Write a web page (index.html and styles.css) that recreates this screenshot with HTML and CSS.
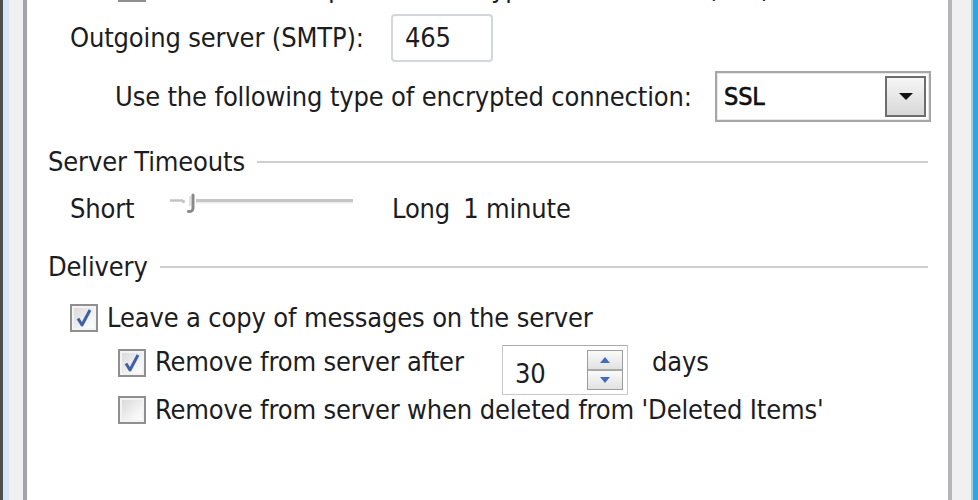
FILE: index.html
```html
<!DOCTYPE html>
<html>
<head>
<meta charset="utf-8">
<link rel="stylesheet" href="styles.css">
</head>
<body>
<div class="window">
  <div class="frame-left"></div>
  <div class="panel">
    <div class="row row-ssl-in">
      <span class="check"></span>
      <span class="label">This server requires an encrypted connection (SSL)</span>
    </div>
    <div class="row row-out">
      <span class="label label-out">Outgoing server (SMTP):</span>
      <div class="textbox">465</div>
    </div>
    <div class="row row-enc">
      <span class="label label-enc">Use the following type of encrypted connection:</span>
      <div class="combo">
        <span class="combo-value">SSL</span>
        <span class="combo-btn"><svg width="16" height="9" viewBox="0 0 16 9"><path d="M1 1 H15 L8 8 Z" fill="#111"/></svg></span>
      </div>
    </div>
    <div class="group group-timeouts">
      <span class="group-title">Server Timeouts</span>
      <span class="group-line"></span>
    </div>
    <div class="row row-timeout">
      <span class="label label-short">Short</span>
      <svg class="slider" width="184" height="30" viewBox="0 0 184 30">
        <path d="M0 8.5 H13 M13.5 8 V11" stroke="#c4c4c4" stroke-width="2.5" fill="none"/>
        <rect x="26" y="7" width="157" height="3" fill="#c6c6c6"/>
        <rect x="26" y="10" width="157" height="1.5" fill="#ececec"/>
        <path d="M23 3 V16 Q23 20 18.5 19.5" stroke="#8a8a8a" stroke-width="3" fill="none" stroke-linecap="round"/>
        <path d="M20 4 V14" stroke="#d8d8d8" stroke-width="1.5"/>
      </svg>
      <span class="label label-long">Long</span>
      <span class="label">1 minute</span>
    </div>
    <div class="group group-delivery">
      <span class="group-title">Delivery</span>
      <span class="group-line"></span>
    </div>
    <div class="row row-leave">
      <span class="check checked"><svg width="24" height="24" viewBox="0 0 24 24"><path d="M6 12.5 L10 19 L18 4" stroke="#3f5fa8" stroke-width="3" fill="none" stroke-linejoin="round"/></svg></span>
      <span class="label">Leave a copy of messages on the server</span>
    </div>
    <div class="row row-after">
      <span class="check checked"><svg width="24" height="24" viewBox="0 0 24 24"><path d="M6 12.5 L10 19 L18 4" stroke="#3f5fa8" stroke-width="3" fill="none" stroke-linejoin="round"/></svg></span>
      <span class="label label-after">Remove from server after</span>
      <div class="spin">
        <span class="spin-value">30</span>
        <span class="spin-btns">
          <span class="spin-btn"><svg width="10" height="6" viewBox="0 0 10 6"><path d="M0 6 L5 0 L10 6 Z" fill="#3d6cc0"/></svg></span>
          <span class="spin-btn"><svg width="10" height="6" viewBox="0 0 10 6"><path d="M0 0 L10 0 L5 6 Z" fill="#3d6cc0"/></svg></span>
        </span>
      </div>
      <span class="label">days</span>
    </div>
    <div class="row row-deleted">
      <span class="check"></span>
      <span class="label">Remove from server when deleted from 'Deleted Items'</span>
    </div>
  </div>
  <div class="frame-right"></div>
</div>
</body>
</html>
```
FILE: styles.css
```css
html, body {
  margin: 0;
  padding: 0;
  background: #f0f0f0;
}
body {
  font-family: "DejaVu Sans Condensed", "DejaVu Sans", "Liberation Sans", sans-serif;
  font-size: 27px;
  letter-spacing: -0.15px;
  color: #1c1c22;
}
.window {
  display: flex;
  height: 500px;
  overflow: hidden;
}
.frame-left {
  width: 23px;
  flex-shrink: 0;
  background: linear-gradient(to right, #4f4f4f 0 3px, #d7e6f6 3px 9px, #f0f0f0 9px 23px);
}
.frame-right {
  width: 26px;
  flex-shrink: 0;
  background: linear-gradient(to right, #f0f0f0 0 19px, #8ed5f1 19px 21px, #36a4dc 21px 26px);
}
.panel {
  flex: 1;
  min-width: 0;
  background: #fff;
  border-left: 4px solid #a4a4ac;
  border-right: 4px solid #b5b5ba;
  padding: 0 20px 0 0;
  display: flex;
  flex-direction: column;
  overflow: hidden;
}
.row {
  display: flex;
  align-items: center;
  flex-shrink: 0;
}
.label {
  white-space: nowrap;
  line-height: 30px;
  flex-shrink: 0;
}
.check {
  width: 24px;
  height: 24px;
  flex-shrink: 0;
  border: 2px solid #8f8f8f;
  background: linear-gradient(135deg, #d6d6d6, #f6f6f6 70%, #fff);
  box-shadow: inset 0 0 0 2px #f3f3f3;
  margin-right: 9px;
  display: flex;
}
.row-ssl-in {
  height: 46px;
  margin-top: -35px;
  padding-left: 91px;
}
.row-out {
  height: 50px;
  margin-top: 2px;
  padding-left: 43px;
}
.label-out {
  width: 321px;
}
.textbox {
  width: 86px;
  height: 44px;
  border: 2px solid #d3d6dc;
  border-radius: 4px;
  padding-left: 12px;
  line-height: 44px;
  flex-shrink: 0;
}
.row-enc {
  height: 51px;
  margin-top: 8px;
  padding-left: 88px;
}
.label-enc {
  width: 600px;
}
.combo {
  width: 212px;
  height: 47px;
  border: 2px solid #a6a6a6;
  box-shadow: inset 0 0 0 1px #e8e8e8;
  display: flex;
  align-items: center;
  justify-content: space-between;
  flex-shrink: 0;
}
.combo-value {
  padding-left: 7px;
  font-size: 25px;
  color: #111;
  -webkit-text-stroke: 0.6px #111;
}
.combo-btn {
  width: 37px;
  height: 37px;
  margin-right: 3px;
  border: 2px solid #6d6d6d;
  background: linear-gradient(#f6f6f6, #d8d8d8);
  display: flex;
  align-items: center;
  justify-content: center;
}
.group {
  display: flex;
  align-items: center;
  height: 30px;
  padding-left: 21px;
  flex-shrink: 0;
}
.group-title {
  white-space: nowrap;
  line-height: 30px;
}
.group-line {
  flex: 1;
  height: 2px;
  margin-left: 12px;
  background: #cfcfcf;
}
.group-timeouts {
  margin-top: 25px;
}
.group-delivery {
  margin-top: 28px;
}
.row-timeout {
  height: 30px;
  margin-top: 17px;
  padding-left: 43px;
}
.label-short {
  width: 100px;
}
.slider {
  flex-shrink: 0;
  margin-top: -4px;
}
.label-long {
  margin-left: 38px;
  margin-right: 13px;
}
.row-leave {
  height: 30px;
  margin-top: 21px;
  padding-left: 43px;
}
.row-after {
  height: 50px;
  margin-top: 10px;
  padding-left: 91px;
  align-items: flex-start;
}
.row-after > .check {
  margin-top: 6px;
}
.row-after > .label {
  margin-top: 4px;
}
.label-after {
  width: 347px;
}
.spin {
  width: 124px;
  height: 48px;
  border: 1px solid #c5c7cc;
  border-top-color: #a9abb0;
  display: flex;
  align-items: center;
  justify-content: space-between;
  margin-top: 2px;
  margin-right: 24px;
  flex-shrink: 0;
}
.spin-value {
  padding-left: 12px;
  padding-top: 6px;
}
.spin-btns {
  width: 34px;
  height: 38px;
  margin-right: 4px;
  border: 1px solid #9c9c9c;
  display: flex;
  flex-direction: column;
}
.spin-btn {
  flex: 1;
  background: linear-gradient(#fafafa, #e2e2e2);
  display: flex;
  align-items: center;
  justify-content: center;
}
.spin-btn + .spin-btn {
  border-top: 2px solid #a8a8a8;
}
.row-deleted {
  height: 30px;
  margin-top: 2px;
  padding-left: 91px;
}
```
